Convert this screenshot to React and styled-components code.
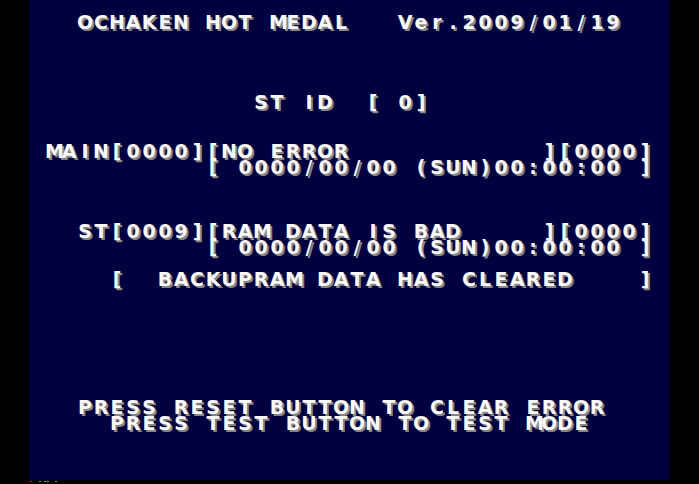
import React from 'react';
import styled, { createGlobalStyle } from 'styled-components';

const GlobalStyle = createGlobalStyle`
  html, body {
    margin: 0;
    padding: 0;
    background: #000;
  }
`;

const Monitor = styled.div`
  width: 699px;
  height: 484px;
  background: #000;
  padding-left: 29px;
  box-sizing: border-box;
  display: flex;
  flex-direction: column;
`;

const Screen = styled.div`
  width: 640px;
  height: 480px;
  flex: none;
  background: #000040;
  padding-top: 14px;
  box-sizing: border-box;
  font-family: "DejaVu Sans", "Noto Sans", sans-serif;
  font-weight: bold;
  font-size: 19px;
  color: #f8f8f8;
  text-shadow: 2px 2px 0 #868686;
`;

const Row = styled.div`
  display: flex;
  height: 16px;
  line-height: 16px;
  margin-top: ${(p) => p.$gap || 0}px;
  padding-left: ${(p) => p.$col * 16}px;
  white-space: pre;
`;

const Cell = styled.span`
  flex: none;
  width: 16px;
  text-align: center;
`;

const Strip = styled.div`
  display: flex;
  height: 4px;
  align-items: flex-start;
`;

const Dot = styled.span`
  flex: none;
  width: ${(p) => p.$w || 1}px;
  height: 1px;
  margin-top: 1px;
  margin-left: ${(p) => p.$x}px;
  background: ${(p) => p.$color};
`;

const lines = [
  { gap: 0, col: 3, text: 'OCHAKEN HOT MEDAL   Ver.2009/01/19' },
  { gap: 64, col: 14, text: 'ST ID  [ 0]' },
  { gap: 33, col: 1, text: 'MAIN[0000][NO ERROR            ][0000]' },
  { gap: 0, col: 11, text: '[ 0000/00/00 (SUN)00:00:00 ]' },
  { gap: 48, col: 3, text: 'ST[0009][RAM DATA IS BAD     ][0000]' },
  { gap: 0, col: 11, text: '[ 0000/00/00 (SUN)00:00:00 ]' },
  { gap: 16, col: 5, text: '[  BACKUPRAM DATA HAS CLEARED    ]' },
  { gap: 112, col: 3, text: 'PRESS RESET BUTTON TO CLEAR ERROR' },
  { gap: 0, col: 5, text: 'PRESS TEST BUTTON TO TEST MODE' },
];

const Line = ({ gap, col, text }) => (
  <Row $gap={gap} $col={col}>
    {text.split('').map((ch, i) => (
      <Cell key={i}>{ch}</Cell>
    ))}
  </Row>
);

export default function App() {
  return (
    <Monitor>
      <GlobalStyle />
      <Screen>
        {lines.map((l, i) => (
          <Line key={i} {...l} />
        ))}
      </Screen>
      <Strip>
        <Dot $x={1} $w={2} $color="#b02828" />
        <Dot $x={7} $w={2} $color="#38c038" />
        <Dot $x={3} $w={2} $color="#38c038" />
        <Dot $x={1} $w={2} $color="#38c038" />
        <Dot $x={6} $w={2} $color="#38c038" />
      </Strip>
    </Monitor>
  );
}
